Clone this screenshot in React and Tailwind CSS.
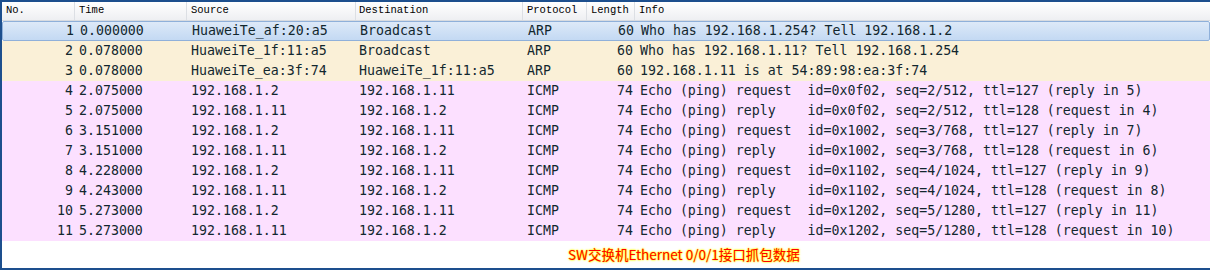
import React from "react";

const cols = "grid grid-cols-[73px_112px_169px_167px_64px_48px_1fr]";

const packets = [
  ["1", "0.000000", "HuaweiTe_af:20:a5", "Broadcast", "ARP", "60", "Who has 192.168.1.254? Tell 192.168.1.2"],
  ["2", "0.078000", "HuaweiTe_1f:11:a5", "Broadcast", "ARP", "60", "Who has 192.168.1.11? Tell 192.168.1.254"],
  ["3", "0.078000", "HuaweiTe_ea:3f:74", "HuaweiTe_1f:11:a5", "ARP", "60", "192.168.1.11 is at 54:89:98:ea:3f:74"],
  ["4", "2.075000", "192.168.1.2", "192.168.1.11", "ICMP", "74", "Echo (ping) request  id=0x0f02, seq=2/512, ttl=127 (reply in 5)"],
  ["5", "2.075000", "192.168.1.11", "192.168.1.2", "ICMP", "74", "Echo (ping) reply    id=0x0f02, seq=2/512, ttl=128 (request in 4)"],
  ["6", "3.151000", "192.168.1.2", "192.168.1.11", "ICMP", "74", "Echo (ping) request  id=0x1002, seq=3/768, ttl=127 (reply in 7)"],
  ["7", "3.151000", "192.168.1.11", "192.168.1.2", "ICMP", "74", "Echo (ping) reply    id=0x1002, seq=3/768, ttl=128 (request in 6)"],
  ["8", "4.228000", "192.168.1.2", "192.168.1.11", "ICMP", "74", "Echo (ping) request  id=0x1102, seq=4/1024, ttl=127 (reply in 9)"],
  ["9", "4.243000", "192.168.1.11", "192.168.1.2", "ICMP", "74", "Echo (ping) reply    id=0x1102, seq=4/1024, ttl=128 (request in 8)"],
  ["10", "5.273000", "192.168.1.2", "192.168.1.11", "ICMP", "74", "Echo (ping) request  id=0x1202, seq=5/1280, ttl=127 (reply in 11)"],
  ["11", "5.273000", "192.168.1.11", "192.168.1.2", "ICMP", "74", "Echo (ping) reply    id=0x1202, seq=5/1280, ttl=128 (request in 10)"],
];

const headers = ["No.", "Time", "Source", "Destination", "Protocol", "Length", "Info"];

export default function App() {
  return (
    <div className="w-[1210px] h-[270px] bg-white border-t-2 border-l-2 border-b-2 border-[#1d4f8e] flex flex-col overflow-hidden">
      {/* Header */}
      <div
        className={`${cols} h-[19px] bg-gradient-to-b from-white to-[#eeeff2] border-b border-[#d8dbe0] text-[10.5px] text-black items-center`}
        style={{ fontFamily: '"Liberation Mono", monospace' }}
      >
        {headers.map((h, i) => (
          <div
            key={h}
            className={`h-full flex items-center ${i === 0 ? "pl-[4px]" : i === 3 ? "pl-[3px]" : "pl-[4px]"} ${
              i < headers.length - 1 ? "border-r border-[#dcdfe4]" : ""
            }`}
          >
            {h}
          </div>
        ))}
      </div>

      {/* Packet list */}
      <div
        className="flex flex-col text-[13.25px] text-[#12272e] leading-none"
        style={{ fontFamily: '"DejaVu Sans Mono", monospace' }}
      >
        {packets.map((p, idx) => {
          const selected = idx === 0;
          const bg = selected
            ? "bg-gradient-to-b from-[#dde9f8] to-[#c3d9f3] border border-[#8fb0da] rounded-[2px]"
            : p[4] === "ARP"
            ? "bg-[#faf0d7]"
            : "bg-[#fce0ff]";
          return (
            <div key={p[0]} className={`${cols} h-[20px] items-center whitespace-pre ${bg}`}>
              <div className="text-right pr-[2px]">{p[0]}</div>
              <div className="pl-[4px]">{p[1]}</div>
              <div className="pl-[4px]">{p[2]}</div>
              <div className="pl-[3px]">{p[3]}</div>
              <div className="pl-[4px]">{p[4]}</div>
              <div className="text-right pr-[2px]">{p[5]}</div>
              <div className="pl-[5px]">{p[6]}</div>
            </div>
          );
        })}
      </div>

      {/* Caption */}
      <div className="flex-1 flex items-center pl-[566px]">
        <span
          className="text-[13.5px] text-[#ff0000]"
          style={{
            fontFamily: '"Noto Sans CJK SC", sans-serif',
            textShadow: "0 0 2px #ffff00, 0 0 2px #ffff00, 0 0 1px #ffff00",
          }}
        >
          SW交换机Ethernet 0/0/1接口抓包数据
        </span>
      </div>
    </div>
  );
}
